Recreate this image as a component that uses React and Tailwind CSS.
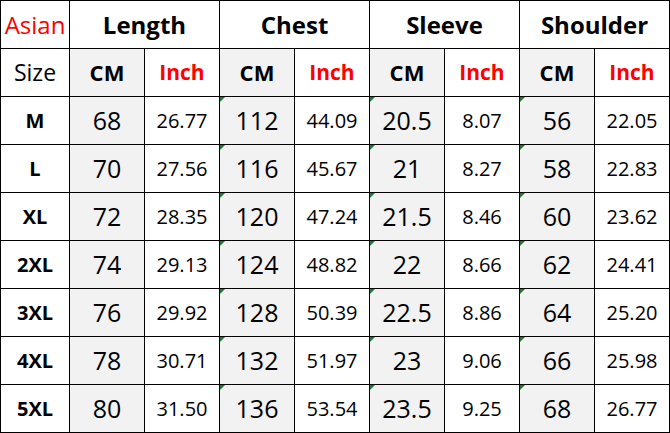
const groups = ["Length", "Chest", "Sleeve", "Shoulder"];

const rows = [
  ["M", "68", "26.77", "112", "44.09", "20.5", "8.07", "56", "22.05"],
  ["L", "70", "27.56", "116", "45.67", "21", "8.27", "58", "22.83"],
  ["XL", "72", "28.35", "120", "47.24", "21.5", "8.46", "60", "23.62"],
  ["2XL", "74", "29.13", "124", "48.82", "22", "8.66", "62", "24.41"],
  ["3XL", "76", "29.92", "128", "50.39", "22.5", "8.86", "64", "25.20"],
  ["4XL", "78", "30.71", "132", "51.97", "23", "9.06", "66", "25.98"],
  ["5XL", "80", "31.50", "136", "53.54", "23.5", "9.25", "68", "26.77"],
];

function Cell({ children, className = "", flag = false }) {
  return (
    <div className={`relative flex items-center justify-center ${className}`}>
      {flag && (
        <span className="absolute left-0 top-0 w-0 h-0 border-t-[5px] border-r-[5px] border-t-[#1e7b24] border-r-transparent" />
      )}
      {children}
    </div>
  );
}

export default function App() {
  return (
    <div
      className="w-[670px] h-[433px] bg-black p-px grid gap-px grid-cols-[68px_repeat(8,74px)] grid-rows-[repeat(9,47px)] text-black"
      style={{ fontFamily: '"Open Sans", "Noto Sans", sans-serif' }}
    >
      {/* header */}
      <Cell className="bg-white text-[24px] text-[#ff0000]">Asian</Cell>
      {groups.map((g) => (
        <Cell key={g} className="col-span-2 bg-white text-[24px] font-bold">
          {g}
        </Cell>
      ))}

      {/* units */}
      <Cell className="bg-white text-[23px]">Size</Cell>
      {groups.map((g) => (
        <div key={g} className="contents">
          <Cell className="bg-[#f2f2f2] text-[22px] font-bold">CM</Cell>
          <Cell className="bg-white text-[21px] font-bold text-[#ff0000]">Inch</Cell>
        </div>
      ))}

      {/* data */}
      {rows.map((r) => (
        <div key={r[0]} className="contents">
          <Cell className="bg-white text-[20px] font-bold">{r[0]}</Cell>
          {r.slice(1).map((v, i) =>
            i % 2 === 0 ? (
              <Cell key={i} flag={i > 0} className="bg-[#f2f2f2] text-[25px]">
                {v}
              </Cell>
            ) : (
              <Cell key={i} className="bg-white text-[20px]">
                {v}
              </Cell>
            )
          )}
        </div>
      ))}
    </div>
  );
}
